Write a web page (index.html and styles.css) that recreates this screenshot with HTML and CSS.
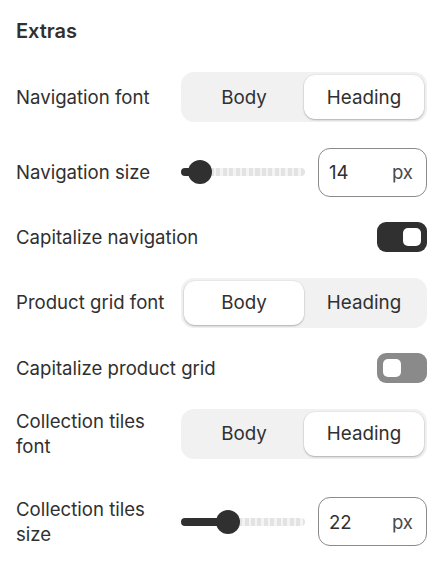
FILE: index.html
```html
<!DOCTYPE html>
<html>
<head>
<meta charset="utf-8">
<link rel="stylesheet" href="styles.css">
</head>
<body>
<div class="panel">
  <h2 class="title">Extras</h2>
  <div class="rows">
    <div class="row">
      <div class="label">Navigation font</div>
      <div class="seg">
        <div class="opt">Body</div>
        <div class="opt on">Heading</div>
      </div>
    </div>
    <div class="row">
      <div class="label">Navigation size</div>
      <div class="range">
        <div class="slider">
          <div class="fill" style="width:19px"></div>
          <div class="thumb"></div>
          <div class="rest"></div>
        </div>
        <div class="num"><span>14</span><span class="unit">px</span></div>
      </div>
    </div>
    <div class="row">
      <div class="label">Capitalize navigation</div>
      <div class="toggle on"><div class="knob"></div></div>
    </div>
    <div class="row">
      <div class="label">Product grid font</div>
      <div class="seg">
        <div class="opt on">Body</div>
        <div class="opt">Heading</div>
      </div>
    </div>
    <div class="row">
      <div class="label">Capitalize product grid</div>
      <div class="toggle off"><div class="knob"></div></div>
    </div>
    <div class="row">
      <div class="label">Collection tiles<br>font</div>
      <div class="seg">
        <div class="opt">Body</div>
        <div class="opt on">Heading</div>
      </div>
    </div>
    <div class="row last">
      <div class="label">Collection tiles<br>size</div>
      <div class="range">
        <div class="slider">
          <div class="fill" style="width:47px"></div>
          <div class="thumb"></div>
          <div class="rest"></div>
        </div>
        <div class="num"><span>22</span><span class="unit">px</span></div>
      </div>
    </div>
  </div>
</div>
</body>
</html>
```
FILE: styles.css
```css
* { box-sizing: border-box; }
html, body { margin: 0; padding: 0; background: #fff; }
body {
  font-family: Inter, "Noto Sans", sans-serif;
  color: #303030;
  width: 443px;
  height: 569px;
  overflow: hidden;
}
.panel { padding: 19px 16px 0 16px; }
.title {
  margin: 0;
  font-size: 20px;
  font-weight: 600;
  line-height: 24px;
}
.rows {
  display: flex;
  flex-direction: column;
  gap: 25.6px;
  margin-top: 29px;
}
.row {
  display: flex;
  align-items: center;
  justify-content: space-between;
  gap: 10px;
}
.row.last { margin-top: 12.4px; }
.label {
  flex: 1;
  min-width: 0;
  font-size: 18.6px;
  line-height: 25px;
  white-space: nowrap;
}
.seg {
  flex: none;
  width: 246px;
  height: 50px;
  background: #f1f1f1;
  border-radius: 13px;
  padding: 3px;
  display: flex;
}
.opt {
  flex: 1;
  display: flex;
  align-items: center;
  justify-content: center;
  font-size: 18.8px;
  border-radius: 11px;
}
.opt.on {
  background: #fff;
  box-shadow: 0 1px 2px rgba(0,0,0,0.25), 0 0 0 0.5px rgba(0,0,0,0.06);
}
.range {
  flex: none;
  display: flex;
  align-items: center;
  gap: 13px;
}
.slider {
  width: 124px;
  height: 26px;
  display: flex;
  align-items: center;
}
.fill {
  height: 8px;
  background: #303030;
  border-radius: 4px 0 0 4px;
  margin-right: -12px;
}
.thumb {
  width: 24px;
  height: 24px;
  border-radius: 50%;
  background: #303030;
  flex: none;
  position: relative;
}
.rest {
  flex: 1;
  height: 8px;
  border-radius: 0 4px 4px 0;
  margin-left: -2px;
  background: repeating-linear-gradient(90deg, #e3e3e3 0 4px, #f4f4f4 4px 6.5px);
}
.num {
  width: 109px;
  height: 49px;
  border: 1px solid #8a8a8a;
  border-radius: 12px;
  display: flex;
  align-items: center;
  justify-content: space-between;
  padding: 0 13px 0 10px;
  font-size: 18.6px;
}
.unit { color: #4a4a4a; }
.toggle {
  flex: none;
  width: 50px;
  height: 30px;
  border-radius: 9px;
  display: flex;
  align-items: center;
  justify-content: flex-end;
  padding: 0 6px;
}
.toggle.on { background: #303030; }
.toggle.off { background: #8a8a8a; justify-content: flex-start; }
.knob {
  width: 18px;
  height: 18px;
  border-radius: 5px;
  background: #fff;
}
```
